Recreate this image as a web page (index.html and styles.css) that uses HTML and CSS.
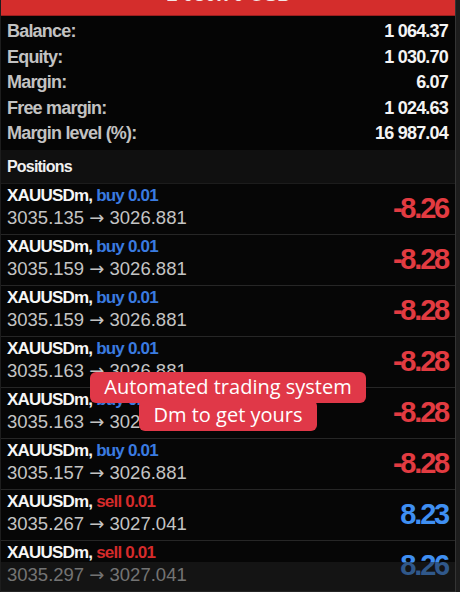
FILE: index.html
```html
<!DOCTYPE html>
<html lang="en">
<head>
    <meta charset="UTF-8">
    <meta name="viewport" content="width=device-width, initial-scale=1.0">
    <title>Trade</title>
    <link rel="stylesheet" href="styles.css">
</head>
<body>
    <div class="screen">
        <header class="topbar">
            <span>1 030.70 USD</span>
        </header>
        <div class="summary">
            <div class="summary-row"><span class="label">Balance:</span><span class="value">1 064.37</span></div>
            <div class="summary-row"><span class="label">Equity:</span><span class="value">1 030.70</span></div>
            <div class="summary-row"><span class="label">Margin:</span><span class="value">6.07</span></div>
            <div class="summary-row"><span class="label">Free margin:</span><span class="value">1 024.63</span></div>
            <div class="summary-row"><span class="label">Margin level (%):</span><span class="value">16 987.04</span></div>
        </div>
        <div class="section-title">Positions</div>
        <ul class="positions">
            <li class="position">
                <div class="info">
                    <div class="symbol">XAUUSDm, <span class="buy">buy 0.01</span></div>
                    <div class="prices">3035.135 <span class="arrow">→</span> 3026.881</div>
                </div>
                <div class="profit loss">-8.26</div>
            </li>
            <li class="position">
                <div class="info">
                    <div class="symbol">XAUUSDm, <span class="buy">buy 0.01</span></div>
                    <div class="prices">3035.159 <span class="arrow">→</span> 3026.881</div>
                </div>
                <div class="profit loss">-8.28</div>
            </li>
            <li class="position">
                <div class="info">
                    <div class="symbol">XAUUSDm, <span class="buy">buy 0.01</span></div>
                    <div class="prices">3035.159 <span class="arrow">→</span> 3026.881</div>
                </div>
                <div class="profit loss">-8.28</div>
            </li>
            <li class="position">
                <div class="info">
                    <div class="symbol">XAUUSDm, <span class="buy">buy 0.01</span></div>
                    <div class="prices">3035.163 <span class="arrow">→</span> 3026.881</div>
                </div>
                <div class="profit loss">-8.28</div>
            </li>
            <li class="position">
                <div class="info">
                    <div class="symbol">XAUUSDm, <span class="buy">buy 0.01</span></div>
                    <div class="prices">3035.163 <span class="arrow">→</span> 3026.881</div>
                </div>
                <div class="profit loss">-8.28</div>
            </li>
            <li class="position">
                <div class="info">
                    <div class="symbol">XAUUSDm, <span class="buy">buy 0.01</span></div>
                    <div class="prices">3035.157 <span class="arrow">→</span> 3026.881</div>
                </div>
                <div class="profit loss">-8.28</div>
            </li>
            <li class="position">
                <div class="info">
                    <div class="symbol">XAUUSDm, <span class="sell">sell 0.01</span></div>
                    <div class="prices">3035.267 <span class="arrow">→</span> 3027.041</div>
                </div>
                <div class="profit gain">8.23</div>
            </li>
            <li class="position">
                <div class="info">
                    <div class="symbol">XAUUSDm, <span class="sell">sell 0.01</span></div>
                    <div class="prices">3035.297 <span class="arrow">→</span> 3027.041</div>
                </div>
                <div class="profit gain">8.26</div>
            </li>
        </ul>
        <div class="caption">
            <span>Automated trading system</span>
            <span>Dm to get yours</span>
        </div>
        <div class="fade"></div>
    </div>
</body>
</html>
```

FILE: styles.css
```css
html, body {
    margin: 0;
    padding: 0;
    height: 100%;
    overflow: hidden;
    background-color: #1d1d1d;
}
body {
    font-family: "Liberation Sans", Arial, sans-serif;
}
.screen {
    position: relative;
    width: 454px;
    height: 592px;
    margin-left: 1px;
    background: #060606;
    border-right: 1px solid #343434;
    overflow: hidden;
}
.topbar {
    height: 15px;
    background: #d42d2c;
    border-bottom: 1px solid #9c1f1f;
    text-align: center;
    overflow: hidden;
}
.topbar span {
    display: block;
    margin-top: -16px;
    padding-left: 2px;
    font-size: 20px;
    line-height: 20px;
    font-weight: bold;
    color: #f3e6e6;
}
.summary {
    padding: 3px 7px 3.5px 6px;
    background: #050505;
}
.summary-row {
    display: flex;
    justify-content: space-between;
    height: 25.5px;
    line-height: 25.5px;
    font-size: 18px;
    font-weight: bold;
    letter-spacing: -0.8px;
}
.summary-row .label {
    color: #c2c2c2;
}
.summary-row .value {
    color: #f4f4f4;
}
.section-title {
    height: 33px;
    line-height: 33px;
    padding-left: 6px;
    background: #101010;
    color: #f0f0f0;
    font-size: 16px;
    font-weight: bold;
    letter-spacing: -0.8px;
    border-bottom: 1px solid #1c1c1c;
}
.positions {
    list-style: none;
    margin: 0;
    padding: 0;
}
.position {
    display: flex;
    justify-content: space-between;
    align-items: center;
    padding: 1px 7px 5px 6px;
    border-bottom: 1px solid #262626;
}
.symbol {
    height: 22px;
    line-height: 22px;
    font-size: 17px;
    font-weight: bold;
    letter-spacing: -0.8px;
    color: #f6f6f6;
}
.buy {
    color: #3a7be0;
}
.sell {
    color: #d52b2b;
}
.prices {
    height: 22px;
    line-height: 22px;
    font-size: 18.5px;
    color: #c4c4c4;
}
.arrow {
    font-family: "DejaVu Sans", sans-serif;
    font-size: 18px;
}
.profit {
    font-size: 29px;
    font-weight: bold;
    letter-spacing: -2.2px;
    padding-top: 2px;
}
.loss {
    color: #e23b41;
}
.gain {
    color: #3f8ff2;
}
.caption {
    position: absolute;
    left: 0;
    right: 0;
    top: 372px;
    display: flex;
    flex-direction: column;
    align-items: center;
    font-family: "Open Sans", sans-serif;
    font-size: 20px;
    font-weight: 500;
    color: #ffffff;
}
.caption span {
    display: block;
    padding: 0 14px;
    height: 31px;
    line-height: 30px;
    background: #e03848;
    border-radius: 6px;
}
.caption span + span {
    margin-top: -3px;
}
.fade {
    position: absolute;
    left: 0;
    right: 0;
    top: 562px;
    bottom: 0;
    background: rgba(34, 34, 34, 0.5);
}
```
